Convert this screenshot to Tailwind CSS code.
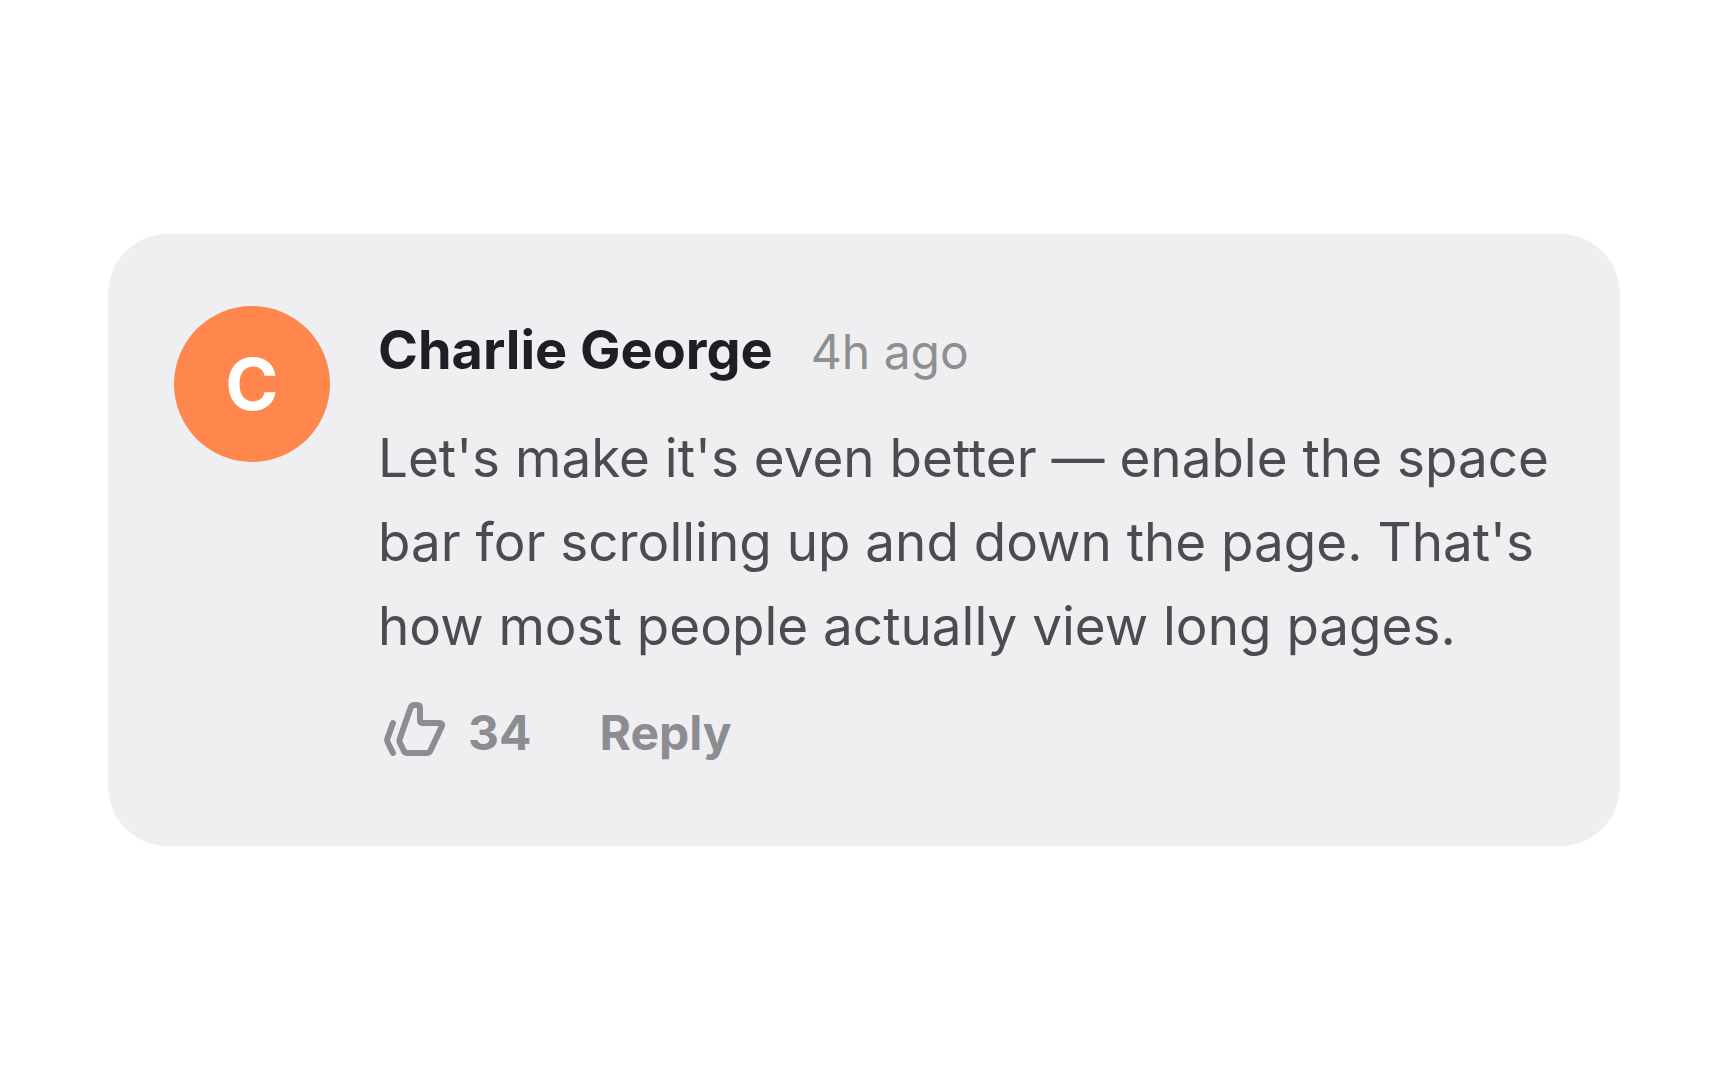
<!DOCTYPE html>
<html lang="en">
<head>
  <meta charset="UTF-8">
  <meta name="viewport" content="width=device-width, initial-scale=1.0">
  <title>Comment</title>
  <script src="https://cdn.jsdelivr.net/npm/@tailwindcss/browser@4"></script>
</head>
<body class="bg-white min-h-screen flex items-center font-['Inter',sans-serif]">
  <main class="w-full px-[108px]">
    <article class="flex items-start gap-[48px] rounded-[60px] bg-[#efeff1] pt-[72px] pb-[82px] pl-[66px] pr-[66px]">
      <div class="flex size-[156px] shrink-0 items-center justify-center rounded-full bg-[#ff864c] text-[72px] leading-[74px] font-bold text-white">C</div>

      <div class="min-w-0 flex-1 pt-[8px]">
        <header class="flex items-baseline gap-[38px]">
          <h2 class="text-[54px] leading-[72px] font-bold text-[#1e1e26]">Charlie George</h2>
          <time class="text-[48px] leading-[60px] text-[#8e8f91]">4h ago</time>
        </header>

        <p class="mt-[30px] text-[53px] leading-[84px] text-[#4b4c50]">Let's make it's even better — enable the space bar for scrolling up and down the page. That's how most people actually view long pages.</p>

        <!-- Actions -->
        <div class="mt-[34px] flex items-start gap-[68px] text-[48px] leading-[62px] font-bold text-[#8c8d90]">
          <button type="button" class="flex items-start gap-[18px]" aria-label="Like, 34 likes">
            <svg class="h-[54px] w-[72px]" viewBox="0 0 72 54" fill="none" stroke="currentColor" stroke-width="6" stroke-linecap="round" stroke-linejoin="round">
              <path d="M15 21L9.400 36.500Q8.800 38.500 9.700 40.200L15 51" />
              <path d="M36.500 3H39Q42 3 42 6V18Q42 21 45 21H61Q65.500 21 63.500 25L52.500 48.500Q51.500 51 49 51H29.500Q27 51 25.800 48.800L21.800 40.500Q21 38.800 21.700 37L32.700 5.500Q33.600 3 36.500 3Z" />
            </svg>
            <span>34</span>
          </button>
          <button type="button">Reply</button>
        </div>
      </div>
    </article>
  </main>
</body>
</html>
